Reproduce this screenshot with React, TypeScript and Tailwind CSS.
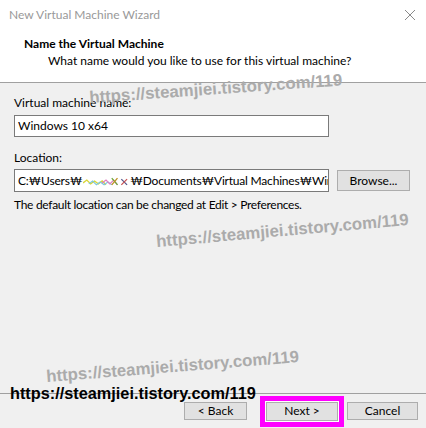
import React from "react";

const WM = "https://steamjiei.tistory.com/119";

function Watermark({ className }: { className: string }) {
  return (
    <div
      className={`pointer-events-none absolute whitespace-nowrap font-['Liberation_Sans',Arial,sans-serif] font-bold leading-[18px] ${className}`}
    >
      {WM}
    </div>
  );
}

// censored user name in the path
function Scribble() {
  return (
    <svg width="46" height="12" viewBox="0 0 48 12" className="mx-[1px] inline-block shrink-0 align-[-2px]">
      <polyline points="0,8 4,5 8,9 12,6 16,9 20,6 24,10" fill="none" stroke="#d9d636" strokeWidth="1.4" />
      <polyline points="6,9 10,6 14,10 18,7 22,10 26,7 30,10" fill="none" stroke="#7cc6e0" strokeWidth="1.2" />
      <polyline points="20,8 24,5 28,9 32,5 36,10" fill="none" stroke="#e07cc0" strokeWidth="1.2" />
      <polyline points="30,3 36,10" fill="none" stroke="#6fa838" strokeWidth="1.4" />
      <polyline points="36,3 30,10" fill="none" stroke="#c09022" strokeWidth="1.4" />
      <polyline points="40,4 46,10" fill="none" stroke="#55558a" strokeWidth="1.3" />
      <polyline points="46,4 40,10" fill="none" stroke="#c85050" strokeWidth="1.3" />
    </svg>
  );
}

function WinButton({ label, className = "" }: { label: string; className?: string }) {
  return (
    <button
      className={`flex items-center justify-center border border-[#adadad] bg-[#e1e1e1] text-[12px] text-black ${className}`}
    >
      {label}
    </button>
  );
}

export default function App() {
  return (
    <div className="relative h-[428px] w-[426px] overflow-hidden bg-[#f0f0f0] font-['Lato','Noto_Sans',sans-serif] text-[12px] text-black">
      {/* title bar */}
      <div className="flex h-[30px] items-center justify-between bg-white pl-[9px] pr-[10px]">
        <span className="text-[12px] text-[#999999]">New Virtual Machine Wizard</span>
        <svg width="12" height="12" viewBox="0 0 12 12">
          <path d="M1 1 L11 11 M11 1 L1 11" stroke="#8a8a8a" strokeWidth="1" />
        </svg>
      </div>

      {/* header */}
      <div className="h-[53px] border-b border-[#a0a0a0] bg-white pl-[24px] pt-[6px]">
        <div className="text-[12px] font-bold leading-[16px]">Name the Virtual Machine</div>
        <div className="pl-[24px] pt-[1px] leading-[16px]">What name would you like to use for this virtual machine?</div>
      </div>

      {/* body */}
      <div className="flex h-[310px] flex-col pl-[14px] pt-[12px]">
        <div className="leading-[16px]">Virtual machine name:</div>
        <div className="mt-[4px] flex h-[22px] w-[315px] items-center border border-[#7a7a7a] bg-white pl-[3px]">
          Windows 10 x64
        </div>
        <div className="mt-[13px] leading-[16px]">Location:</div>
        <div className="mt-[3px] flex items-center">
          <div className="h-[23px] w-[315px] overflow-hidden whitespace-nowrap border border-[#7a7a7a] bg-white pl-[3px] leading-[21px] tracking-[-0.2px]">
            C:₩Users₩<Scribble />₩Documents₩Virtual Machines₩Windows 10 x64
          </div>
          <WinButton label="Browse..." className="ml-[8px] h-[21px] w-[73px]" />
        </div>
        <div className="mt-[5px] leading-[16px] tracking-[-0.3px]">
          The default location can be changed at Edit &gt; Preferences.
        </div>
      </div>

      {/* footer */}
      <div className="flex h-[35px] items-center border-t border-[#a0a0a0] pl-[184px]">
        <WinButton label="< Back" className="h-[18px] w-[63px]" />
        <div className="ml-[13px] border-[5px] border-[#ff00ff] bg-white p-px">
          <WinButton label="Next >" className="h-[19px] w-[72px]" />
        </div>
        <WinButton label="Cancel" className="ml-[3px] h-[18px] w-[71px]" />
      </div>

      {/* watermarks */}
      <Watermark className="left-[90px] top-[89px] origin-[0_100%] -rotate-[4deg] text-[16.8px] text-[#ababab]" />
      <Watermark className="left-[157px] top-[233px] origin-[0_100%] -rotate-[5deg] text-[16.8px] text-[#ababab]" />
      <Watermark className="left-[47px] top-[368px] origin-[0_100%] -rotate-[4.5deg] text-[16.8px] text-[#ababab]" />
      <Watermark className="left-[10px] top-[384px] text-[16.3px] text-black" />
    </div>
  );
}
